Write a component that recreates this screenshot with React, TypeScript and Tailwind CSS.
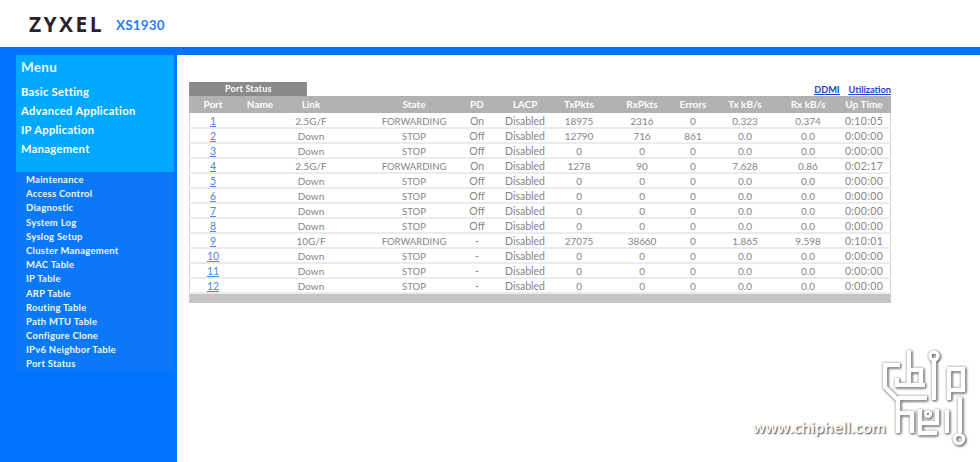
const mainMenu = ['Basic Setting', 'Advanced Application', 'IP Application', 'Management'];
const subMenu = [
  'Maintenance',
  'Access Control',
  'Diagnostic',
  'System Log',
  'Syslog Setup',
  'Cluster Management',
  'MAC Table',
  'IP Table',
  'ARP Table',
  'Routing Table',
  'Path MTU Table',
  'Configure Clone',
  'IPv6 Neighbor Table',
  'Port Status',
];

const rows = [
  ['1', '2.5G/F', 'FORWARDING', 'On', '18975', '2316', '0', '0.323', '0.374', '0:10:05'],
  ['2', 'Down', 'STOP', 'Off', '12790', '716', '861', '0.0', '0.0', '0:00:00'],
  ['3', 'Down', 'STOP', 'Off', '0', '0', '0', '0.0', '0.0', '0:00:00'],
  ['4', '2.5G/F', 'FORWARDING', 'On', '1278', '90', '0', '7.628', '0.86', '0:02:17'],
  ['5', 'Down', 'STOP', 'Off', '0', '0', '0', '0.0', '0.0', '0:00:00'],
  ['6', 'Down', 'STOP', 'Off', '0', '0', '0', '0.0', '0.0', '0:00:00'],
  ['7', 'Down', 'STOP', 'Off', '0', '0', '0', '0.0', '0.0', '0:00:00'],
  ['8', 'Down', 'STOP', 'Off', '0', '0', '0', '0.0', '0.0', '0:00:00'],
  ['9', '10G/F', 'FORWARDING', '-', '27075', '38660', '0', '1.865', '9.598', '0:10:01'],
  ['10', 'Down', 'STOP', '-', '0', '0', '0', '0.0', '0.0', '0:00:00'],
  ['11', 'Down', 'STOP', '-', '0', '0', '0', '0.0', '0.0', '0:00:00'],
  ['12', 'Down', 'STOP', '-', '0', '0', '0', '0.0', '0.0', '0:00:00'],
];

// chiphell watermark, stroked lines
function ChipHellLogo() {
  return (
    <svg
      viewBox="0 0 100 110"
      className="w-[100px] h-[110px] [filter:drop-shadow(1px_1px_1px_rgba(70,70,70,0.8))_drop-shadow(0_0_1px_rgba(120,120,120,0.7))]"
      fill="none"
      stroke="#fff"
      strokeWidth="4.5"
    >
      {/* c + h of hell */}
      <path d="M25 20H10V42L23 55V88" />
      <path d="M23 53H52" />
      <path d="M23 68H37V88" />
      <path d="M22 33V40H50" />
      {/* h */}
      <path d="M34 5V40" />
      <path d="M34 25H46V40" />
      {/* i */}
      <circle cx="59" cy="11" r="4" strokeWidth="3.5" />
      <path d="M59 15V55" />
      {/* p */}
      <path d="M74 55V24H88V45H74" />
      {/* e */}
      <circle cx="53" cy="69" r="2.5" strokeWidth="3" />
      <path d="M45 64V88H62M45 78H62V64" />
      {/* l */}
      <path d="M72 65V88" />
      <path d="M85 52V88" />
      <circle cx="84" cy="94" r="4.5" strokeWidth="3.5" />
    </svg>
  );
}

export default function App() {
  return (
    <div className="relative w-[980px] h-[462px] overflow-hidden bg-white font-['Lato',sans-serif]">
      <header className="h-[47px] bg-white pl-[29px] pt-[14px] flex items-start">
        <span className="text-[21px] leading-[20px] font-bold tracking-[2.4px] text-[#2b2424] font-['Open_Sans',sans-serif]">
          ZYXEL
        </span>
        <span className="ml-[12px] mt-[2px] text-[13.5px] leading-[18px] font-bold text-[#2a7bf6] tracking-[0.2px]">
          XS1930
        </span>
      </header>
      <div className="h-[415px] flex border-t-[8px] border-[#0073ff]">
        <aside className="w-[177px] shrink-0 bg-[#0073ff] pl-[16px] pr-[3px]">
          <div className="h-[117px] bg-[#00a8ff] pl-[5px] pt-[3px] text-white font-bold">
            <div className="text-[13.5px] leading-[18px] text-[#e4f6ff] tracking-[0.3px]">Menu</div>
            <ul className="mt-[6px]">
              {mainMenu.map((item) => (
                <li key={item} className="h-[19px] text-[11.2px] leading-[19px] tracking-[0.3px]">
                  {item}
                </li>
              ))}
            </ul>
          </div>
          <ul className="h-[199px] bg-[#0a78f7] pl-[10px] pt-[1px] font-bold text-[#eef6ff]">
            {subMenu.map((item) => (
              <li key={item} className="h-[14.2px] text-[9.5px] leading-[14.2px] tracking-[0.25px] whitespace-nowrap">
                {item}
              </li>
            ))}
          </ul>
        </aside>
        <main className="flex-1 pl-[12px] pt-[27px]">
          <div className="w-[702px]">
            <div className="h-[14px] flex justify-between items-start">
              <div className="w-[118px] h-[14px] bg-[#8a8a8a] pl-[36px] text-[9px] leading-[14px] font-bold text-white tracking-[0.2px]">
                Port Status
              </div>
              <div className="flex gap-[9px] pt-[1px] text-[9.2px] leading-[14px] font-bold text-[#1247d6] underline">
                <a>DDMI</a>
                <a>Utilization</a>
              </div>
            </div>
            <div className="border-x-[1px] border-[#d6d6d6]">
              <table className="w-[702px] -mx-px table-fixed border-collapse text-center text-[10.5px] leading-[12px] text-[#858585]">
                <colgroup>
                  <col className="w-[48px]" />
                  <col className="w-[46px]" />
                  <col className="w-[92px]" />
                  <col className="w-[78px]" />
                  <col className="w-[48px]" />
                  <col className="w-[48px]" />
                  <col className="w-[60px]" />
                  <col className="w-[66px]" />
                  <col className="w-[36px]" />
                  <col className="w-[68px]" />
                  <col className="w-[58px]" />
                  <col className="w-[54px]" />
                </colgroup>
                <thead>
                  <tr className="h-[17px] bg-[#b2b2b2] text-[10px] text-white font-bold">
                    <th className="p-0 pb-[1px]">Port</th>
                    <th className="p-0 pb-[1px]">Name</th>
                    <th className="p-0 pb-[1px] pr-[36px]">Link</th>
                    <th className="p-0 pb-[1px]">State</th>
                    <th className="p-0 pb-[1px]">PD</th>
                    <th className="p-0 pb-[1px]">LACP</th>
                    <th className="p-0 pb-[1px]">TxPkts</th>
                    <th className="p-0 pb-[1px]">RxPkts</th>
                    <th className="p-0 pb-[1px]">Errors</th>
                    <th className="p-0 pb-[1px]">Tx kB/s</th>
                    <th className="p-0 pb-[1px]">Rx kB/s</th>
                    <th className="p-0 pb-[1px]">Up Time</th>
                  </tr>
                </thead>
                <tbody>
                  {rows.map((r) => (
                    <tr key={r[0]} className="h-[15px] border-b-2 border-[#ebebeb]">
                      <td className="p-0 pt-[1px]">
                        <a className="text-[#4a88ea] underline">{r[0]}</a>
                      </td>
                      <td className="p-0"></td>
                      <td className="p-0 pt-[1px] pr-[36px] text-[10px]">{r[1]}</td>
                      <td className="p-0 pt-[2px] leading-[11px] text-[9.5px]">{r[2]}</td>
                      <td className="p-0 pt-[1px]">{r[3]}</td>
                      <td className="p-0 pt-[1px]">Disabled</td>
                      <td className="p-0 pt-[1px] text-[10px] tracking-[-0.1px]">{r[4]}</td>
                      <td className="p-0 pt-[1px] text-[10px] tracking-[-0.1px]">{r[5]}</td>
                      <td className="p-0 pt-[1px] text-[10px]">{r[6]}</td>
                      <td className="p-0 pt-[1px] text-[10px]">{r[7]}</td>
                      <td className="p-0 pt-[1px] text-[10px]">{r[8]}</td>
                      <td className="p-0 pt-[1px] tracking-[0.35px]">{r[9]}</td>
                    </tr>
                  ))}
                </tbody>
              </table>
            </div>
            <div className="h-[9px] bg-[#c4c4c4]" />
          </div>
        </main>
      </div>
      <div className="absolute left-[875px] top-[345px]">
        <ChipHellLogo />
      </div>
      <span className="absolute left-[753px] top-[418px] text-[15px] leading-[18px] font-semibold text-white font-['Open_Sans',sans-serif] [text-shadow:1px_1px_1.5px_rgba(50,50,50,0.95)]">
        www.chiphell.com
      </span>
    </div>
  );
}
